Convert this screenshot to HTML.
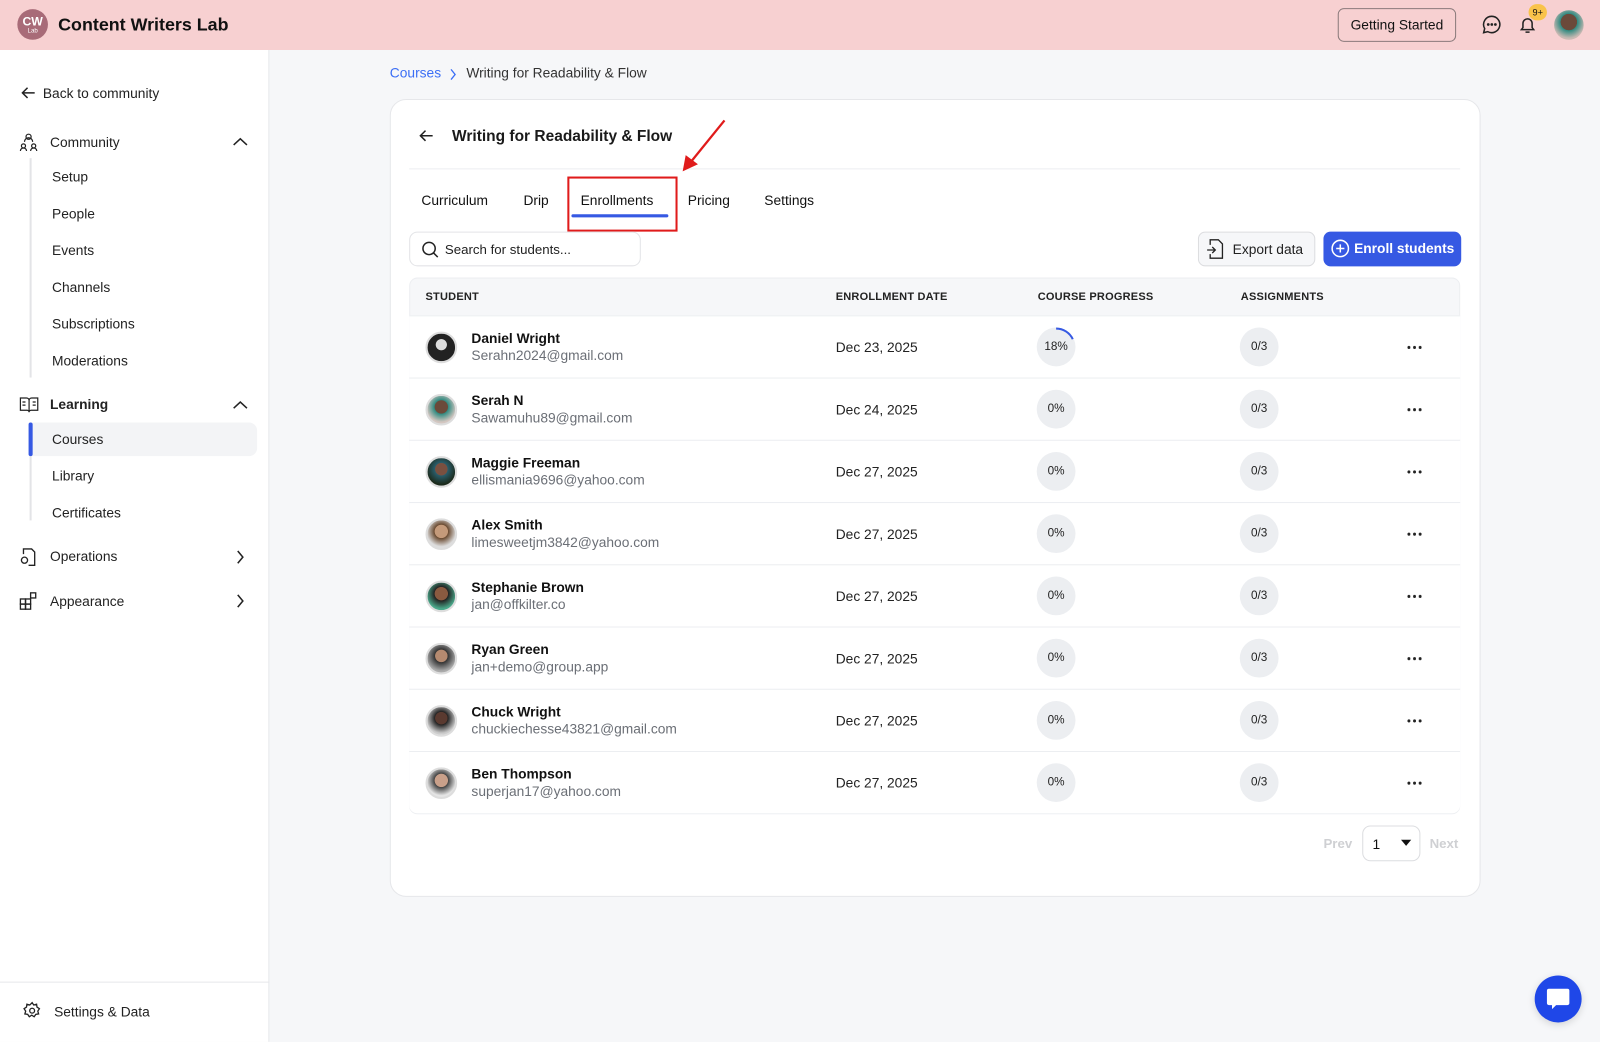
<!DOCTYPE html>
<html><head><meta charset="utf-8"><style>
*{box-sizing:border-box;margin:0;padding:0}
html,body{width:1600px;height:1041px;overflow:hidden;background:#f6f7f9;font-family:"Liberation Sans",sans-serif;color:#111}
#w{position:absolute;left:0;top:0;width:1568px;height:1021px;transform:scale(1.0204);transform-origin:0 0;background:#f6f7f9}
.a{position:absolute}
.hdr{left:0;top:0;width:1568px;height:49px;background:#f7d0d1}
.side{left:0;top:49px;width:264px;height:972px;background:#fff;border-right:1px solid #e6e7ea}
.si{position:absolute;font-size:13.5px;color:#222}
.sub{position:absolute;left:51px;font-size:13.5px;color:#222}
.card{left:382px;top:97px;width:1069px;height:782px;background:#fff;border:1px solid #e6e7ea;border-radius:16px}
.th{position:absolute;top:285px;font-size:10.8px;font-weight:bold;color:#222;letter-spacing:.2px}
.row{position:absolute;left:401px;width:1030px;height:61px;border-top:1px solid #eceef1;background:#fff}
.av{position:absolute;left:16px;top:15px;width:31px;height:31px;border-radius:50%;border:2px solid #ddd}
.nm{position:absolute;left:61px;top:14px;font-size:13.5px;font-weight:bold;color:#111}
.em{position:absolute;left:61px;top:31px;font-size:13.5px;color:#6b6f76}
.dt{position:absolute;left:418px;top:23px;font-size:13.5px;color:#222}
.pc{position:absolute;top:11px;width:38px;height:38px;border-radius:50%;background:#eceef1;font-size:11.5px;color:#222;text-align:center;line-height:38px}
.dots{position:absolute;left:977px;top:29px;width:16px;height:3px;background:radial-gradient(circle,#222 1.4px,transparent 1.6px) 0 0/5.5px 3px repeat-x}
</style></head><body><div id="w">
<div class="a hdr"></div>
<div class="a" style="left:17px;top:9px;width:30px;height:30px;border-radius:50%;background:#a86b78;color:#fff;text-align:center">
<div style="font-size:12px;font-weight:bold;line-height:14px;margin-top:5px">CW</div><div style="font-size:6px;line-height:7px">Lab</div></div>
<div class="a" style="left:57px;top:14px;font-size:17.5px;font-weight:bold">Content Writers Lab</div>
<div class="a" style="left:1311px;top:8px;width:116px;height:33px;border:1px solid #8a7a7b;border-radius:6px;font-size:13.5px;text-align:center;line-height:31px">Getting Started</div>
<svg class="a" style="left:1452px;top:14px" width="20" height="20" viewBox="0 0 20 20" fill="none" stroke="#222" stroke-width="1.5"><path d="M10 2a8 8 0 1 1-4 15l-4 1 1-4A8 8 0 0 1 10 2z"/><circle cx="6.5" cy="10" r=".6" fill="#222"/><circle cx="10" cy="10" r=".6" fill="#222"/><circle cx="13.5" cy="10" r=".6" fill="#222"/></svg>
<svg class="a" style="left:1487px;top:14px" width="20" height="20" viewBox="0 0 20 20" fill="none" stroke="#222" stroke-width="1.5"><path d="M4 15h12l-1.5-2V9a4.5 4.5 0 0 0-9 0v4z"/><path d="M8 17.5h4"/></svg>
<div class="a" style="left:1498px;top:4px;width:18px;height:16px;border-radius:8px;background:#f9c34a;font-size:9px;text-align:center;line-height:16px">9+</div>
<div class="a" style="left:1523px;top:10px;width:29px;height:29px;border-radius:50%;background:radial-gradient(circle at 50% 40%,#6b4a3a 0 35%,#2f8a80 36%,#c9b9b3 70%)"></div>

<div class="a side"></div>
<svg class="a" style="left:20px;top:83px" width="16" height="16" viewBox="0 0 16 16" fill="none" stroke="#222" stroke-width="1.5"><path d="M14 8H2M7 3L2 8l5 5"/></svg>
<div class="si" style="left:42px;top:84px">Back to community</div>
<svg class="a" style="left:18px;top:129px" width="20" height="20" viewBox="0 0 20 20" fill="none" stroke="#222" stroke-width="1.2"><circle cx="10" cy="5" r="2.5"/><circle cx="5" cy="14" r="2"/><circle cx="15" cy="14" r="2"/><path d="M6 10a4 4 0 0 1 8 0M2 19a3 3 0 0 1 6 0M12 19a3 3 0 0 1 6 0"/></svg>
<div class="si" style="left:49px;top:132px">Community</div>
<svg class="a" style="left:228px;top:134px" width="15" height="10" viewBox="0 0 15 10" fill="none" stroke="#222" stroke-width="1.5"><path d="M1 8l6.5-6L14 8"/></svg>
<div class="a" style="left:29px;top:155px;width:2px;height:215px;background:#e3e4e7"></div>
<div class="sub" style="top:166px">Setup</div><div class="sub" style="top:202px">People</div><div class="sub" style="top:238px">Events</div><div class="sub" style="top:274px">Channels</div><div class="sub" style="top:310px">Subscriptions</div><div class="sub" style="top:346px">Moderations</div>
<svg class="a" style="left:19px;top:388px" width="19" height="17" viewBox="0 0 19 17" fill="none" stroke="#222" stroke-width="1.2"><path d="M1 2h6a2.5 2.5 0 0 1 2.5 2.5V16A2 2 0 0 0 7.5 14H1zM18 2h-6a2.5 2.5 0 0 0-2.5 2.5V16a2 2 0 0 1 2-2H18z"/><path d="M3 6h3M3 9h3M13 6h3M13 9h3"/></svg>
<div class="si" style="left:49px;top:389px;font-weight:bold">Learning</div>
<svg class="a" style="left:228px;top:392px" width="15" height="10" viewBox="0 0 15 10" fill="none" stroke="#222" stroke-width="1.5"><path d="M1 8l6.5-6L14 8"/></svg>
<div class="a" style="left:29px;top:414px;width:2px;height:96px;background:#e3e4e7"></div>
<div class="a" style="left:30px;top:414px;width:222px;height:33px;background:#f3f4f6;border-radius:0 8px 8px 0"></div>
<div class="a" style="left:28px;top:414px;width:4px;height:33px;background:#3659e3;border-radius:2px"></div>
<div class="sub" style="top:423px">Courses</div><div class="sub" style="top:459px">Library</div><div class="sub" style="top:495px">Certificates</div>
<svg class="a" style="left:19px;top:536px" width="18" height="19" viewBox="0 0 18 19" fill="none" stroke="#222" stroke-width="1.3"><path d="M4 7V2h8l3 3v13H9"/><circle cx="5" cy="13" r="3"/></svg>
<div class="si" style="left:49px;top:538px">Operations</div>
<svg class="a" style="left:231px;top:539px" width="9" height="14" viewBox="0 0 9 14" fill="none" stroke="#222" stroke-width="1.5"><path d="M2 1l5 6-5 6"/></svg>
<svg class="a" style="left:19px;top:580px" width="18" height="18" viewBox="0 0 18 18" fill="none" stroke="#222" stroke-width="1.3"><rect x="1" y="7" width="5" height="5"/><rect x="6" y="7" width="5" height="5"/><rect x="1" y="12" width="5" height="5"/><rect x="6" y="12" width="5" height="5"/><rect x="11" y="1" width="5" height="5"/></svg>
<div class="si" style="left:49px;top:582px">Appearance</div>
<svg class="a" style="left:231px;top:582px" width="9" height="14" viewBox="0 0 9 14" fill="none" stroke="#222" stroke-width="1.5"><path d="M2 1l5 6-5 6"/></svg>
<div class="a" style="left:0;top:962px;width:264px;height:1px;background:#e6e7ea"></div>
<svg class="a" style="left:22px;top:981px" width="19" height="19" viewBox="0 0 24 24" fill="none" stroke="#222" stroke-width="1.6"><circle cx="12" cy="12" r="3"/><path d="M12 2l2 3 3.5-1 .5 3.5 3 2-2 3 1 3.5-3.5.5-2 3-3-2-3 2-2-3-3.5-.5 1-3.5-2-3 3-2 .5-3.5 3.5 1z"/></svg>
<div class="si" style="left:53px;top:984px">Settings &amp; Data</div>

<div class="a" style="left:382px;top:64px;font-size:13.5px;color:#3b6ef5">Courses</div>
<svg class="a" style="left:440px;top:67px" width="8" height="12" viewBox="0 0 8 12" fill="none" stroke="#3b6ef5" stroke-width="1.3"><path d="M2 1l4 5-4 5"/></svg>
<div class="a" style="left:457px;top:64px;font-size:13.5px;color:#333">Writing for Readability &amp; Flow</div>

<div class="a card"></div>
<svg class="a" style="left:410px;top:125px" width="16" height="16" viewBox="0 0 16 16" fill="none" stroke="#222" stroke-width="1.5"><path d="M14 8H2M7 3L2 8l5 5"/></svg>
<div class="a" style="left:443px;top:125px;font-size:15.2px;font-weight:bold;color:#1a1a1a">Writing for Readability &amp; Flow</div>
<div class="a" style="left:401px;top:165px;width:1030px;height:1px;background:#eceef1"></div>
<div class="a" style="left:413px;top:189px;font-size:13.5px">Curriculum</div>
<div class="a" style="left:513px;top:189px;font-size:13.5px">Drip</div>
<div class="a" style="left:569px;top:189px;font-size:13.5px">Enrollments</div>
<div class="a" style="left:674px;top:189px;font-size:13.5px">Pricing</div>
<div class="a" style="left:749px;top:189px;font-size:13.5px">Settings</div>
<div class="a" style="left:560px;top:210px;width:95px;height:3px;background:#3659e3;border-radius:2px"></div>
<div class="a" style="left:556px;top:173px;width:108px;height:54px;border:2px solid #e01b1b"></div>
<svg class="a" style="left:664px;top:114px" width="50" height="56" viewBox="0 0 50 56"><path d="M46 4L12 46" stroke="#e01b1b" stroke-width="2.2"/><path d="M5 54l3-16 12 9z" fill="#e01b1b"/></svg>

<div class="a" style="left:401px;top:227px;width:227px;height:34px;border:1px solid #e3e4e7;border-radius:8px"></div>
<svg class="a" style="left:413px;top:236px" width="17" height="17" viewBox="0 0 17 17" fill="none" stroke="#222" stroke-width="1.5"><circle cx="7.5" cy="7.5" r="6"/><path d="M12 12l4 4"/></svg>
<div class="a" style="left:436px;top:237px;font-size:13px;color:#222">Search for students...</div>

<div class="a" style="left:1174px;top:227px;width:115px;height:34px;border:1px solid #dcdde0;border-radius:7px;background:#f6f7f9"></div>
<svg class="a" style="left:1182px;top:234px" width="18" height="20" viewBox="0 0 18 20" fill="none" stroke="#222" stroke-width="1.3"><path d="M4 6V1h8l4 4v14H4v-4"/><path d="M1 11h8M6 8l3 3-3 3"/></svg>
<div class="a" style="left:1208px;top:237px;font-size:13.5px;color:#222">Export data</div>
<div class="a" style="left:1297px;top:227px;width:135px;height:34px;border-radius:7px;background:#3659e3"></div>
<svg class="a" style="left:1304px;top:234px" width="19" height="19" viewBox="0 0 19 19" fill="none" stroke="#fff" stroke-width="1.5"><circle cx="9.5" cy="9.5" r="8"/><path d="M9.5 5.5v8M5.5 9.5h8"/></svg>
<div class="a" style="left:1327px;top:236px;font-size:13.5px;font-weight:bold;color:#fff">Enroll students</div>

<div class="a" style="left:401px;top:272px;width:1030px;height:526px;border:1px solid #eceef1;border-radius:8px;background:#f6f7f9;overflow:hidden">
</div>
<div class="th" style="left:417px">STUDENT</div>
<div class="th" style="left:819px">ENROLLMENT DATE</div>
<div class="th" style="left:1017px">COURSE PROGRESS</div>
<div class="th" style="left:1216px">ASSIGNMENTS</div>

<div class="row" style="top:309px"><div class="av" style="background:radial-gradient(circle at 50% 40%,#ddd 0 25%,#222 27%)"></div><div class="nm">Daniel Wright</div><div class="em">Serahn2024@gmail.com</div><div class="dt">Dec 23, 2025</div><div class="pc" style="left:615px">18%</div><svg class="a" style="left:615px;top:11px" width="38" height="38"><circle cx="19" cy="19" r="18" fill="none" stroke="#3659e3" stroke-width="2" stroke-dasharray="20.4 200" transform="rotate(-90 19 19)"/></svg><div class="pc" style="left:814px">0/3</div><div class="dots"></div></div>
<div class="row" style="top:370px"><div class="av" style="background:radial-gradient(circle at 50% 40%,#6b4a3a 0 30%,#2f8a80 32%,#d3c6c0 70%)"></div><div class="nm">Serah N</div><div class="em">Sawamuhu89@gmail.com</div><div class="dt">Dec 24, 2025</div><div class="pc" style="left:615px">0%</div><div class="pc" style="left:814px">0/3</div><div class="dots"></div></div>
<div class="row" style="top:431px"><div class="av" style="background:radial-gradient(circle at 50% 40%,#7a5040 0 28%,#2a5d6b 30%,#1c2b1c 70%)"></div><div class="nm">Maggie Freeman</div><div class="em">ellismania9696@yahoo.com</div><div class="dt">Dec 27, 2025</div><div class="pc" style="left:615px">0%</div><div class="pc" style="left:814px">0/3</div><div class="dots"></div></div>
<div class="row" style="top:492px"><div class="av" style="background:radial-gradient(circle at 50% 40%,#c49a7a 0 30%,#6a4a30 32%,#ddd 70%)"></div><div class="nm">Alex Smith</div><div class="em">limesweetjm3842@yahoo.com</div><div class="dt">Dec 27, 2025</div><div class="pc" style="left:615px">0%</div><div class="pc" style="left:814px">0/3</div><div class="dots"></div></div>
<div class="row" style="top:553px"><div class="av" style="background:radial-gradient(circle at 50% 40%,#8a5a40 0 30%,#222 32%,#4aa88a 70%)"></div><div class="nm">Stephanie Brown</div><div class="em">jan@offkilter.co</div><div class="dt">Dec 27, 2025</div><div class="pc" style="left:615px">0%</div><div class="pc" style="left:814px">0/3</div><div class="dots"></div></div>
<div class="row" style="top:614px"><div class="av" style="background:radial-gradient(circle at 50% 40%,#b58a70 0 28%,#333 30%,#aaa 70%)"></div><div class="nm">Ryan Green</div><div class="em">jan+demo@group.app</div><div class="dt">Dec 27, 2025</div><div class="pc" style="left:615px">0%</div><div class="pc" style="left:814px">0/3</div><div class="dots"></div></div>
<div class="row" style="top:675px"><div class="av" style="background:radial-gradient(circle at 50% 40%,#5a3a30 0 28%,#222 30%,#ccc 70%)"></div><div class="nm">Chuck Wright</div><div class="em">chuckiechesse43821@gmail.com</div><div class="dt">Dec 27, 2025</div><div class="pc" style="left:615px">0%</div><div class="pc" style="left:814px">0/3</div><div class="dots"></div></div>
<div class="row" style="top:736px;height:61px;border-radius:0 0 8px 8px"><div class="av" style="background:radial-gradient(circle at 50% 40%,#c9a08a 0 30%,#444 32%,#e5e5e5 70%)"></div><div class="nm">Ben Thompson</div><div class="em">superjan17@yahoo.com</div><div class="dt">Dec 27, 2025</div><div class="pc" style="left:615px">0%</div><div class="pc" style="left:814px">0/3</div><div class="dots"></div></div>

<div class="a" style="left:1297px;top:819px;font-size:13px;font-weight:bold;color:#cfd0d3">Prev</div>
<div class="a" style="left:1335px;top:809px;width:57px;height:35px;border:1px solid #dcdde0;border-radius:8px;font-size:13.5px;padding:10px 0 0 9px">1</div>
<div class="a" style="left:1373px;top:823px;width:0;height:0;border-left:5px solid transparent;border-right:5px solid transparent;border-top:6px solid #111"></div>
<div class="a" style="left:1401px;top:819px;font-size:13px;font-weight:bold;color:#cfd0d3">Next</div>

<div class="a" style="left:1504px;top:956px;width:46px;height:46px;border-radius:50%;background:#1f47e8;box-shadow:0 2px 8px rgba(0,0,0,.15)"></div>
<svg class="a" style="left:1514px;top:966px" width="26" height="26" viewBox="0 0 26 26"><path d="M4 3h18a2 2 0 0 1 2 2v12a2 2 0 0 1-2 2H11l-4 4v-4H4a2 2 0 0 1-2-2V5a2 2 0 0 1 2-2z" fill="#fff"/></svg>
</div></body></html>
